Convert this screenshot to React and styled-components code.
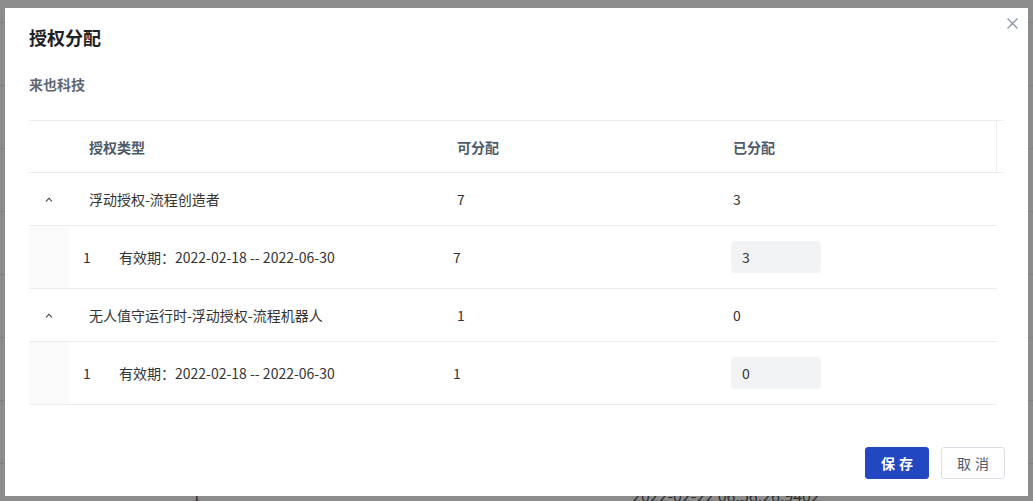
import React, { useState } from "react";
import styled, { createGlobalStyle } from "styled-components";

const GlobalStyle = createGlobalStyle`
  html, body {
    margin: 0;
    padding: 0;
    font-family: "Noto Sans CJK SC", "Noto Sans", sans-serif;
  }
`;

const Page = styled.div`
  position: relative;
  width: 1033px;
  height: 501px;
  overflow: hidden;
  background: #ffffff;
`;

const BgRow = styled.div`
  height: 63px;
  border-top: 1px solid #e6e6e6;
  box-sizing: border-box;
  display: flex;
  align-items: center;
  font-size: 14px;
  color: #555;
  &:first-child {
    margin-top: 22px;
  }
`;

const BgCell = styled.span`
  width: ${(p) => p.$w}px;
  padding-left: ${(p) => p.$pl || 0}px;
  flex-shrink: 0;
  font-size: 16px;
`;

const Overlay = styled.div`
  position: absolute;
  inset: 0;
  background: rgba(0, 0, 0, 0.45);
`;

const Modal = styled.div`
  position: absolute;
  left: 5px;
  top: 8px;
  width: 1023px;
  height: 488px;
  background: #fff;
  box-sizing: border-box;
  padding: 0 24px 0 24px;
  display: flex;
  flex-direction: column;
`;

const Title = styled.h2`
  margin: 0;
  padding-top: 17px;
  height: 42px;
  box-sizing: border-box;
  font-size: 18px;
  line-height: 24px;
  font-weight: 700;
  color: #1d2129;
`;

const Close = styled.button`
  position: absolute;
  right: 6px;
  top: 5px;
  width: 20px;
  height: 20px;
  padding: 0;
  border: none;
  background: transparent;
  display: flex;
  align-items: center;
  justify-content: center;
  cursor: pointer;
`;

const Company = styled.div`
  margin-top: 24px;
  font-size: 14px;
  line-height: 20px;
  font-weight: 700;
  color: #5f6673;
`;

const Table = styled.div`
  margin-top: 26px;
  width: 975px;
`;

const HeaderRow = styled.div`
  display: grid;
  grid-template-columns: 40px 372px 276px 280px 7px;
  height: 53px;
  border-top: 1px solid #ededed;
  border-bottom: 1px solid #ededed;
  box-sizing: border-box;
  align-items: center;
`;

const HeadCell = styled.div`
  padding-left: ${(p) => p.$pl ?? 16}px;
  font-size: 14px;
  font-weight: 700;
  color: #4e5969;
  height: 100%;
  display: flex;
  align-items: center;
  box-sizing: border-box;
  border-right: ${(p) => (p.$last ? "1px solid #ededed" : "none")};
`;

const Body = styled.div`
  width: 968px;
`;

const Row = styled.div`
  display: grid;
  grid-template-columns: 40px 372px 276px 280px;
  height: 53px;
  border-bottom: 1px solid #ededed;
  box-sizing: border-box;
  align-items: center;
  font-size: 14px;
  color: #333;
`;

const Cell = styled.div`
  padding-left: ${(p) => p.$pl ?? 16}px;
  box-sizing: border-box;
  display: flex;
  align-items: center;
`;

const Toggle = styled.button`
  border: none;
  background: transparent;
  padding: 0;
  margin-left: 16px;
  width: 8px;
  height: 8px;
  display: flex;
  align-items: center;
  justify-content: center;
  cursor: pointer;
`;

const SubRow = styled.div`
  display: grid;
  grid-template-columns: 40px 36px 334px 278px 280px;
  height: 63px;
  border-bottom: 1px solid #ededed;
  box-sizing: border-box;
  align-items: center;
  font-size: 14px;
  color: #333;
`;

const Gutter = styled.div`
  height: 100%;
  background: #fafafa;
`;

const SubCell = styled.div`
  padding-left: 14px;
  box-sizing: border-box;
`;

const CountInput = styled.input`
  width: 90px;
  height: 32px;
  box-sizing: border-box;
  border: none;
  border-radius: 4px;
  background: #f2f3f5;
  padding: 0 11px;
  font-family: inherit;
  font-size: 14px;
  color: #333;
  outline: none;
`;

const Footer = styled.div`
  margin-top: auto;
  margin-right: -1px;
  padding-bottom: 17px;
  display: flex;
  justify-content: flex-end;
  gap: 12px;
`;

const Button = styled.button`
  width: 64px;
  height: 32px;
  box-sizing: border-box;
  border-radius: 3px;
  font-family: inherit;
  font-size: 14px;
  letter-spacing: 4px;
  text-indent: 4px;
  cursor: pointer;
  border: 1px solid ${(p) => (p.$primary ? "#2148c0" : "#dcdfe6")};
  background: ${(p) => (p.$primary ? "#2148c0" : "#fff")};
  color: ${(p) => (p.$primary ? "#fff" : "#4e5969")};
  font-weight: ${(p) => (p.$primary ? 700 : 400)};
`;

const data = [
  {
    name: "浮动授权-流程创造者",
    total: 7,
    used: 3,
    items: [{ idx: 1, period: "有效期：2022-02-18 -- 2022-06-30", total: 7, used: "3" }],
  },
  {
    name: "无人值守运行时-浮动授权-流程机器人",
    total: 1,
    used: 0,
    items: [{ idx: 1, period: "有效期：2022-02-18 -- 2022-06-30", total: 1, used: "0" }],
  },
];

const Caret = () => (
  <svg width="8" height="5" viewBox="0 0 8 5" fill="none">
    <path d="M1 4.5L4 1.2L7 4.5" stroke="#333" strokeWidth="1.1" />
  </svg>
);

const App = () => {
  const [rows, setRows] = useState(data);

  const editUsed = (i, j, value) => {
    setRows((prev) =>
      prev.map((r, ri) =>
        ri !== i
          ? r
          : { ...r, items: r.items.map((it, ij) => (ij !== j ? it : { ...it, used: value })) }
      )
    );
  };

  return (
    <Page>
      <GlobalStyle />
      {Array.from({ length: 8 }).map((_, i) => (
        <BgRow key={i}>
          {i === 7 && (
            <>
              <BgCell $w={190} $pl={192}>1</BgCell>
              <BgCell $w={440} $pl={250}>2022-02-22 06:56:26.9402</BgCell>
            </>
          )}
        </BgRow>
      ))}
      <Overlay />
      <Modal>
        <Title>授权分配</Title>
        <Close aria-label="关闭">
          <svg width="11" height="11" viewBox="0 0 11 11">
            <path d="M0.5 0.5L10.5 10.5M10.5 0.5L0.5 10.5" stroke="#86909c" strokeWidth="1.1" />
          </svg>
        </Close>
        <Company>来也科技</Company>
        <Table>
          <HeaderRow>
            <HeadCell />
            <HeadCell $pl={20}>授权类型</HeadCell>
            <HeadCell>可分配</HeadCell>
            <HeadCell $last>已分配</HeadCell>
            <HeadCell />
          </HeaderRow>
          <Body>
            {rows.map((r, i) => (
              <React.Fragment key={r.name}>
                <Row>
                  <Cell $pl={0}>
                    <Toggle aria-label="收起">
                      <Caret />
                    </Toggle>
                  </Cell>
                  <Cell $pl={20}>{r.name}</Cell>
                  <Cell>{r.total}</Cell>
                  <Cell>{r.used}</Cell>
                </Row>
                {r.items.map((it, j) => (
                  <SubRow key={j}>
                    <Gutter />
                    <SubCell>{it.idx}</SubCell>
                    <SubCell>{it.period}</SubCell>
                    <SubCell>{it.total}</SubCell>
                    <SubCell>
                      <CountInput value={it.used} onChange={(e) => editUsed(i, j, e.target.value)} />
                    </SubCell>
                  </SubRow>
                ))}
              </React.Fragment>
            ))}
          </Body>
        </Table>
        <Footer>
          <Button $primary>保存</Button>
          <Button>取消</Button>
        </Footer>
      </Modal>
    </Page>
  );
};

export default App;
